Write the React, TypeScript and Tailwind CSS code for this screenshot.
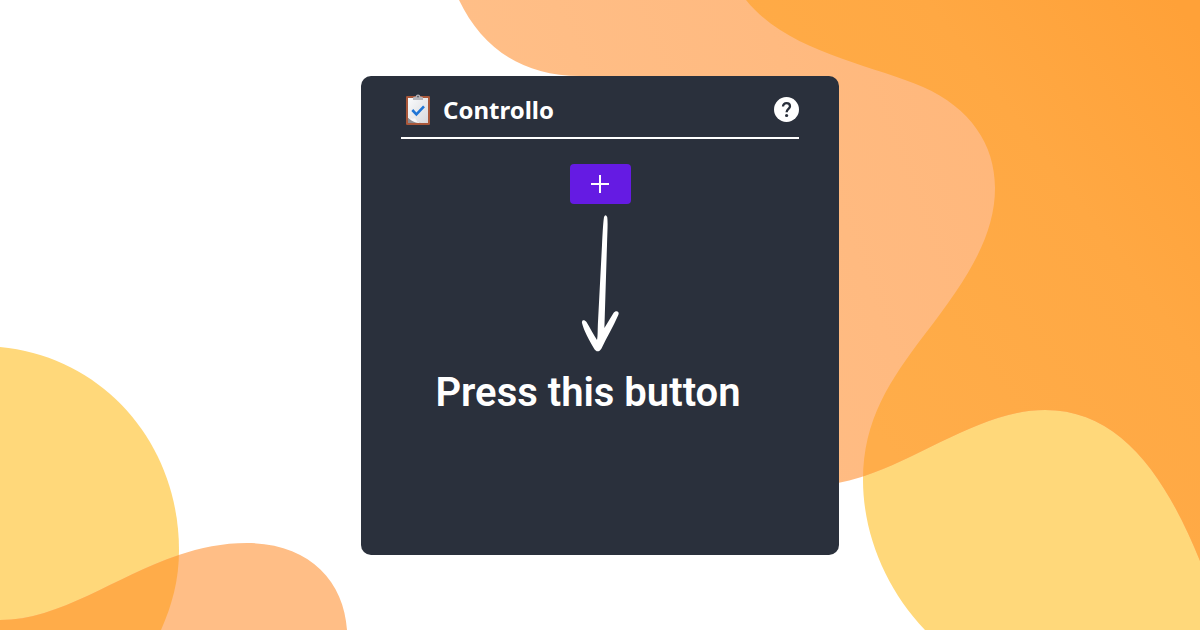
import React from "react";

function Background() {
  return (
    <svg
      aria-hidden="true"
      className="absolute inset-0 h-full w-full"
      viewBox="0 0 1200 630"
      preserveAspectRatio="xMidYMid slice"
    >
      <defs>
        <linearGradient id="peach" gradientUnits="userSpaceOnUse" x1="460" y1="300" x2="1000" y2="100">
          <stop offset="0" stopColor="#ffc08a" />
          <stop offset="1" stopColor="#ffb77b" />
        </linearGradient>
        <linearGradient id="orange" gradientUnits="userSpaceOnUse" x1="820" y1="360" x2="1220" y2="60">
          <stop offset="0" stopColor="#ffad4a" />
          <stop offset="0.6" stopColor="#ffa843" />
          <stop offset="1" stopColor="#ffa138" />
        </linearGradient>
        <clipPath id="right-blob">
          <path d="M746 0C788 52 870 64 923 87C970 108 995 144 995 188C995 237 966 281 925 334C890 380 863 420 863 480C863 534 886 589 925 630H1200V0Z" />
        </clipPath>
        <clipPath id="left-blob">
          <path d="M0 347C105 357 179 445 179 550C179 580 172 605 161 630H0Z" />
        </clipPath>
      </defs>
      <path
        fill="#ffd87a"
        d="M746 0C788 52 870 64 923 87C970 108 995 144 995 188C995 237 966 281 925 334C890 380 863 420 863 480C863 534 886 589 925 630H1200V0Z"
      />
      <path
        fill="url(#peach)"
        d="M459 0C481 46 520 76 580 76L700 483H838C908 470 975 410 1045 410C1120 410 1165 475 1200 561V0Z"
      />
      <path
        fill="url(#orange)"
        clipPath="url(#right-blob)"
        d="M459 0L700 483H838C908 470 975 410 1045 410C1120 410 1165 475 1200 561V0Z"
      />
      <path fill="#ffd87a" d="M0 347C105 357 179 445 179 550C179 580 172 605 161 630H0Z" />
      <path fill="#ffbe86" d="M0 620C80 620 150 543 247 543C308 543 344 580 347 630H0Z" />
      <path
        fill="#ffac49"
        clipPath="url(#left-blob)"
        d="M0 620C80 620 150 543 247 543C308 543 344 580 347 630H0Z"
      />
    </svg>
  );
}

function ClipboardIcon() {
  return (
    <svg aria-hidden="true" className="h-8 w-[26px]" viewBox="0 0 26 32">
      <defs>
        <linearGradient id="paper" x1="0" y1="0" x2="1" y2="1">
          <stop offset="0" stopColor="#fafbfc" />
          <stop offset="1" stopColor="#d8d8dc" />
        </linearGradient>
      </defs>
      <rect x="1" y="2" width="24" height="29" rx="1.2" fill="#a9573a" />
      <path d="M3 4H23V29H12L3 24Z" fill="url(#paper)" />
      <path d="M3 24L16 29H3Z" fill="#8e8c90" />
      <path d="M3 23.500C6 25 8 24.800 10 24.300C11 26.500 13 28.500 16 29C10 29 6 27 3 23.500Z" fill="#f6f6f8" />
      <path d="M8 6V4Q8 2.800 9.500 2.800H10.500Q11 0.500 13 0.500Q15 0.500 15.500 2.800H16.500Q18 2.800 18 4V6Z" fill="#b5b4ba" />
      <circle cx="13" cy="2.600" r="0.900" fill="#55565e" />
      <path d="M7.300 16L11.400 20.300L19 12.400" fill="none" stroke="#1f75d6" strokeWidth="2.600" />
    </svg>
  );
}

function HelpIcon() {
  return (
    <svg aria-hidden="true" className="size-[25px]" viewBox="0 0 25 25">
      <circle cx="12.500" cy="12.500" r="12.500" fill="#fff" />
      <path
        d="M9 9.600C9 7.400 10.500 6.200 12.500 6.200C14.600 6.200 16 7.500 16 9.300C16 11.900 12.600 11.900 12.600 15.300"
        fill="none"
        stroke="#2a303c"
        strokeWidth="2.300"
      />
      <circle cx="12.600" cy="18.500" r="1.600" fill="#2a303c" />
    </svg>
  );
}

function Arrow() {
  return (
    <svg aria-hidden="true" className="h-[138px] w-10" viewBox="0 0 40 138" fill="#fff">
      <path d="M24 3Q25.500 -0.500 27.200 3C28 8 27.400 17 27 31L24.400 114L33.500 99C35.500 96 40 97 38.300 101C33 113 27 123 21.500 134.500C19 138.500 16 138 14 134.500C9 126 4 117 2 109C1.500 105.500 4.500 105.500 6.500 108C10 114 13.500 120.500 17 126C18 122 17.500 114 18.200 104L22 31C22.600 20 23 10 24 3Z" />
    </svg>
  );
}

export default function App() {
  return (
    <div className="relative flex min-h-screen items-center justify-center overflow-hidden bg-white">
      <Background />
      <main className="relative min-h-[479px] w-full max-w-[478px] rounded-[10px] bg-[#2a303c] px-10 pt-4 pb-8 text-white">
        <header className="flex items-center justify-between border-b-2 border-white pb-[9px]">
          <div className="flex items-center gap-3 pl-1">
            <ClipboardIcon />
            <h1 className="font-['Noto_Sans',sans-serif] text-2xl leading-9 font-bold">Controllo</h1>
          </div>
          <button type="button" aria-label="Help" className="rounded-full">
            <HelpIcon />
          </button>
        </header>
        <div className="flex flex-col items-center pt-[25px]">
          <button
            type="button"
            aria-label="Add"
            className="flex h-10 w-[61px] items-center justify-center rounded bg-[#651be3]"
          >
            <svg aria-hidden="true" className="size-[18px]" viewBox="0 0 18 18">
              <path d="M9 0V18M0 9H18" stroke="#fff" strokeWidth="2" />
            </svg>
          </button>
          <div className="pt-[10px]">
            <Arrow />
          </div>
          <p className="pt-[17px] pr-6 font-[Roboto,sans-serif] text-[40px] leading-12 font-semibold">
            Press this button
          </p>
        </div>
      </main>
    </div>
  );
}
